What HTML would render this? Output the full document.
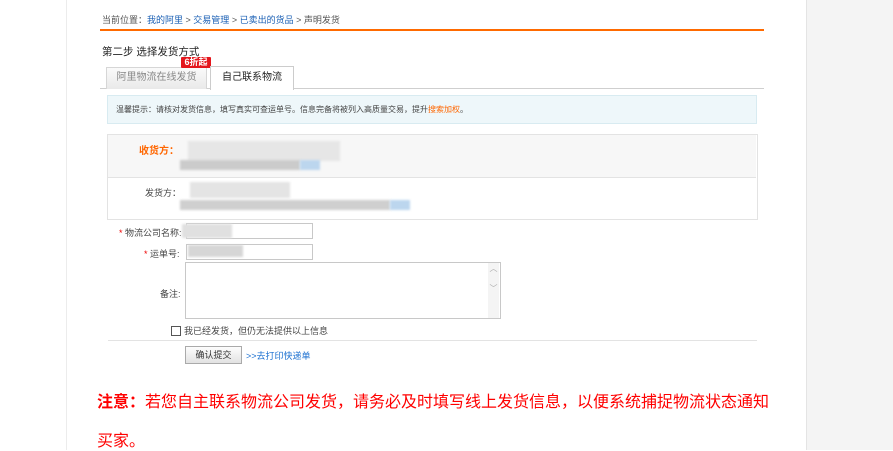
<!DOCTYPE html>
<html><head><meta charset="utf-8"><style>
body{margin:0;width:893px;height:450px;overflow:hidden;background:#fff;position:relative;font-family:"Liberation Sans","Noto Sans CJK SC","WenQuanYi Zen Hei",sans-serif;}
.a{position:absolute;white-space:nowrap;}
.s{font-size:9px;color:#333;}
.b{background:#ccc;position:absolute;filter:blur(1px);}
</style></head><body>
<div class="a" style="left:66px;top:0;width:1px;height:450px;background:#ececec"></div>
<div class="a" style="left:806px;top:0;width:87px;height:450px;background:#f4f4f4;border-left:1px solid #e4e4e4"></div>

<div class="a s" style="left:102px;top:13px;color:#555">当前位置：<span style="color:#1a5fb4">我的阿里</span> &gt; <span style="color:#1a5fb4">交易管理</span> &gt; <span style="color:#1a5fb4">已卖出的货品</span> &gt; 声明发货</div>
<div class="a" style="left:100px;top:29px;width:664px;height:2px;background:#ff6a00"></div>

<div class="a" style="left:102px;top:44px;font-size:10.5px;color:#222">第二步 选择发货方式</div>
<div class="a" style="left:106px;top:67px;width:99px;height:21px;background:linear-gradient(#fafafa,#e9e9e9);border:1px solid #d6d6d6;border-bottom:none;font-size:10px;color:#888;text-align:center;line-height:20px">阿里物流在线发货</div>
<div class="a" style="left:181px;top:57px;width:30px;height:11px;background:#e4161c;color:#fff;font-size:9px;font-weight:bold;text-align:center;line-height:11px;border-radius:1px">6折起</div>
<div class="a" style="left:210px;top:66px;width:82px;height:23px;background:#fff;border:1px solid #ccc;border-bottom:none;font-size:10px;color:#222;text-align:center;line-height:22px">自己联系物流</div>
<div class="a" style="left:100px;top:88px;width:664px;height:1px;background:#cfcfcf;z-index:-1"></div>

<div class="a" style="left:107px;top:95px;width:650px;height:29px;background:#eef7fa;border:1px solid #d8ebf1;line-height:27px;padding-left:8px;box-sizing:border-box;font-size:8px;color:#444">温馨提示：请核对发货信息，填写真实可查运单号。信息完备将被列入高质量交易，提升<span style="color:#f60">搜索加权</span>。</div>

<div class="a" style="left:107px;top:134px;width:649px;height:84px;border:1px solid #e3e3e3"></div>
<div class="a" style="left:108px;top:135px;width:648px;height:42px;background:#f7f7f7;border-bottom:1px solid #e3e3e3"></div>
<div class="a" style="left:139px;top:142px;font-size:10px;font-weight:bold;color:#f60">收货方：</div>
<div class="b" style="left:188px;top:141px;width:152px;height:20px;background:#e6e6e6"></div>
<div class="b" style="left:180px;top:160px;width:120px;height:10px;background:#cbcbcb"></div>
<div class="b" style="left:300px;top:160px;width:20px;height:10px;background:#bcd6ee"></div>
<div class="a s" style="left:145px;top:186px;color:#444">发货方：</div>
<div class="b" style="left:190px;top:182px;width:100px;height:16px;background:#e4e4e4"></div>
<div class="b" style="left:180px;top:200px;width:210px;height:10px;background:#cfcfcf"></div>
<div class="b" style="left:390px;top:200px;width:20px;height:10px;background:#bcd6ee"></div>

<div class="a s" style="left:119px;top:226px;color:#444"><span style="color:#e00">*</span> 物流公司名称:</div>
<div class="a" style="left:186px;top:223px;width:125px;height:14px;border:1px solid #c8c8c8"></div>
<div class="b" style="left:182px;top:224px;width:50px;height:14px;background:#e0e0e0"></div>
<div class="a s" style="left:144px;top:247px;color:#444"><span style="color:#e00">*</span> 运单号:</div>
<div class="a" style="left:186px;top:244px;width:125px;height:14px;border:1px solid #c8c8c8"></div>
<div class="b" style="left:188px;top:245px;width:55px;height:12px;background:#d6d6d6"></div>
<div class="a" style="left:185px;top:262px;width:314px;height:55px;border:1px solid #c8c8c8"></div>
<div class="a" style="left:488px;top:263px;width:11px;height:55px;background:#f4f4f4;color:#aaa;font-size:8px;text-align:center">︿<br><br>﹀</div>
<div class="a s" style="left:160px;top:287px;color:#444">备注:</div>
<div class="a" style="left:171px;top:326px;width:8px;height:8px;border:1px solid #555"></div>
<div class="a s" style="left:184px;top:324px;color:#444">我已经发货，但仍无法提供以上信息</div>
<div class="a" style="left:108px;top:340px;width:649px;height:1px;background:#e3e3e3"></div>
<div class="a s" style="left:185px;top:346px;width:55px;height:16px;border:1px solid #aaa;background:linear-gradient(#fdfdfd,#e2e2e2);text-align:center;line-height:16px">确认提交</div>
<div class="a s" style="left:246px;top:349px;color:#1a6fd0">&gt;&gt;去打印快递单</div>

<div class="a" style="left:97px;top:388px;font-size:16px;color:#f00"><b>注意：</b>若您自主联系物流公司发货，请务必及时填写线上发货信息，以便系统捕捉物流状态通知</div>
<div class="a" style="left:97px;top:427px;font-size:16px;color:#f00">买家。</div>
</body></html>
